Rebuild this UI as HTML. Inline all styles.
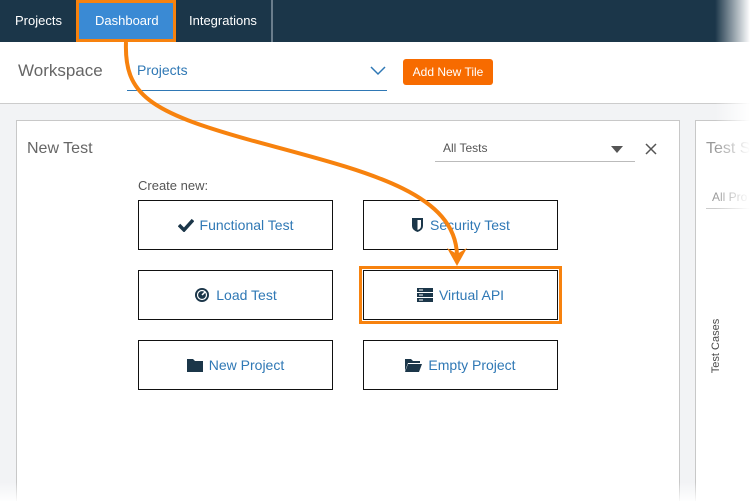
<!DOCTYPE html>
<html style="width:750px;height:501px;overflow:hidden"><head><style>
body{margin:0;width:750px;height:501px;overflow:hidden;position:relative;font-family:"Liberation Sans",sans-serif;background:#f2f3f5}
.nav{position:absolute;left:0;top:0;width:750px;height:42px;background:#1b3649}
.nav span{position:absolute;top:13px;color:#fff;font-size:13px}
.dash{position:absolute;left:76px;top:0;width:94px;height:36px;background:#3a8ad4;border:3px solid #f7820e}
.ws{position:absolute;left:0;top:42px;width:750px;height:61px;background:#fff;border-bottom:1px solid #ccc}
.panel{position:absolute;background:#fff;border:1px solid #c8c8c8;border-bottom:none}
.btn{position:absolute;width:193px;height:48px;border:1px solid #111;background:#fff;display:flex;align-items:center;justify-content:center;color:#2f78b5;font-size:14px}
.btn svg{margin-right:6px}
</style></head><body>
<div class="nav">
<span style="left:15px">Projects</span>
<div class="dash"></div>
<span style="left:95px">Dashboard</span>
<span style="left:189px">Integrations</span>
<div style="position:absolute;left:271px;top:0;width:2px;height:42px;background:#6a7d8c"></div>
</div>
<div class="ws">
<div style="position:absolute;left:18px;top:19px;font-size:17px;color:#666">Workspace</div>
<div style="position:absolute;left:137px;top:20px;font-size:14px;color:#2f78b5">Projects</div>
<div style="position:absolute;left:127px;top:48px;width:260px;height:1px;background:#2f78b5"></div>
<svg style="position:absolute;left:370px;top:24px" width="16" height="10"><path d="M1 1L8 8L15 1" stroke="#2f78b5" stroke-width="1.5" fill="none"/></svg>
<div style="position:absolute;left:403px;top:17px;width:90px;height:26px;background:#f76b00;border-radius:3px;color:#fff;font-size:12px;line-height:26px;text-align:center">Add New Tile</div>
</div>
<div class="panel" style="left:16px;top:120px;width:662px;height:381px">
<div style="position:absolute;left:10px;top:19px;font-size:16px;color:#666">New Test</div>
<div style="position:absolute;left:426px;top:20px;font-size:12px;color:#555">All Tests</div>
<div style="position:absolute;left:418px;top:40px;width:200px;height:1px;background:#bbb"></div>
<svg style="position:absolute;left:594px;top:25px" width="12" height="7"><path d="M0 0H12L6 7Z" fill="#555"/></svg>
<svg style="position:absolute;left:628px;top:22px" width="12" height="12"><path d="M1 1L11 11M11 1L1 11" stroke="#555" stroke-width="1.5"/></svg>
<div style="position:absolute;left:121px;top:57px;font-size:13px;color:#555">Create new:</div>
</div>
<div class="panel" style="left:695px;top:120px;width:55px;height:381px">
<div style="position:absolute;left:10px;top:19px;font-size:16px;color:#999">Test S</div>
<div style="position:absolute;left:16px;top:69px;font-size:12px;color:#999">All Pro</div>
<div style="position:absolute;left:10px;top:87px;width:45px;height:1px;background:#ccc"></div>
<div style="position:absolute;left:-7px;top:219px;font-size:11px;color:#444;transform:rotate(-90deg)">Test Cases</div>
</div>
<div class="btn" style="left:138px;top:200px"><svg width="16" height="14"><path d="M1 7L6 12L15 2" stroke="#1b3649" stroke-width="3.5" fill="none"/></svg>Functional Test</div>
<div class="btn" style="left:363px;top:200px"><svg width="13" height="16"><path d="M1 1H12V9Q12 13 6.5 15Q1 13 1 9Z" fill="#1b3649"/><path d="M6.5 3V13Q10 12 10 9V3Z" fill="#fff"/></svg>Security Test</div>
<div class="btn" style="left:138px;top:270px"><svg width="16" height="16"><circle cx="8" cy="8" r="7" fill="#1b3649"/><circle cx="8" cy="8" r="4.5" fill="none" stroke="#fff" stroke-width="1.2"/><path d="M8 8L11 5" stroke="#fff" stroke-width="1.5"/></svg>Load Test</div>
<div style="position:absolute;left:359px;top:266px;width:197px;height:52px;border:3px solid #f7820e"></div>
<div class="btn" style="left:363px;top:270px"><svg width="16" height="14"><rect x="0" y="0" width="16" height="4" fill="#1b3649"/><rect x="0" y="5" width="16" height="4" fill="#1b3649"/><rect x="0" y="10" width="16" height="4" fill="#1b3649"/><rect x="2" y="1.5" width="4" height="1" fill="#fff"/><rect x="2" y="6.5" width="4" height="1" fill="#fff"/><rect x="2" y="11.5" width="4" height="1" fill="#fff"/></svg>Virtual API</div>
<div class="btn" style="left:138px;top:340px"><svg width="16" height="14"><path d="M0 1H6L8 3H16V14H0Z" fill="#1b3649"/></svg>New Project</div>
<div class="btn" style="left:363px;top:340px"><svg width="17" height="14"><path d="M0 1H6L8 3H15V5H3L0 13Z" fill="#1b3649"/><path d="M3 6H17L14 14H0Z" fill="#1b3649"/></svg>Empty Project</div>
<svg style="position:absolute;left:0;top:0" width="750" height="501"><path d="M126 42C124 95 150 112 250 140C360 170 455 190 457 255" stroke="#f7820e" stroke-width="4" fill="none"/><path d="M447 248L457 266L467 248L457 254Z" fill="#f7820e"/></svg>
<div style="position:absolute;left:715px;top:0;width:35px;height:501px;background:linear-gradient(to right,rgba(255,255,255,0),#fff)"></div>
<div style="position:absolute;left:0;top:482px;width:750px;height:19px;background:linear-gradient(rgba(255,255,255,0),rgba(255,255,255,.9))"></div>
</body></html>
